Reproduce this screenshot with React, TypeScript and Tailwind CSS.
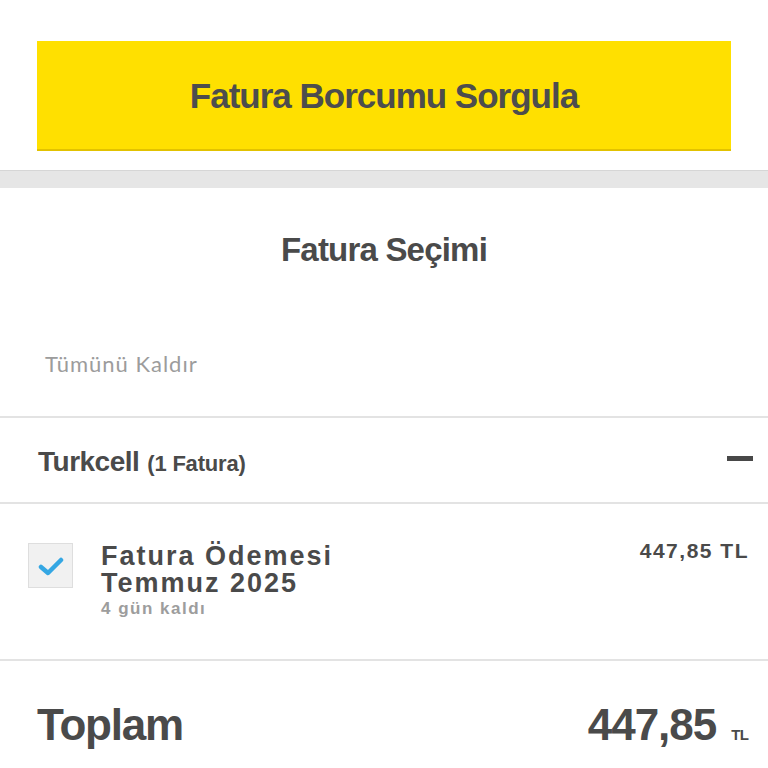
import React from "react";

export default function App() {
  const helv = { fontFamily: '"Liberation Sans", Arial, sans-serif' };
  return (
    <div className="w-[768px] h-[768px] overflow-hidden bg-white text-[#4a4a4a]" style={helv}>
      <div className="pt-[41px] px-[37px] pb-[19px]">
        <div className="h-[110px] bg-[#ffe000] border-b-2 border-[#e2c200] flex items-center justify-center">
          <span className="text-[35px] font-bold tracking-[-1px] text-[#4d4d4d] leading-[40px] mt-[2px]">Fatura Borcumu Sorgula</span>
        </div>
      </div>
      <div className="h-[18px] bg-[#e6e6e6] border-t border-[#d6d6d6]" />
      <div className="pt-[42px] flex justify-center">
        <span className="text-[33px] font-bold tracking-[-0.8px] text-[#4a4a4a] leading-[40px]">Fatura Seçimi</span>
      </div>
      <div className="pt-[77px] pl-[45px] h-[146px]">
        <span className="text-[22px] text-[#9c9c9c] tracking-[1px]" style={{ fontFamily: '"Lato", "Noto Sans", sans-serif', fontWeight: 400 }}>
          Tümünü Kaldır
        </span>
      </div>
      <div className="border-t-2 border-[#e3e3e3] h-[86px] flex items-center justify-between pl-[38px] pr-[15px]">
        <div className="flex items-baseline pt-[4px]">
          <span className="text-[28px] font-bold tracking-[-0.5px] text-[#4a4a4a]">Turkcell</span>
          <span className="text-[22px] font-bold tracking-[-0.2px] text-[#4a4a4a] ml-[8px]">(1 Fatura)</span>
        </div>
        <div className="w-[26px] h-[5px] bg-[#484848] mt-[-4px]" />
      </div>
      <div className="border-t-2 border-[#e3e3e3] h-[157px] flex pl-[28px] pr-[19px] pt-[37px]">
        <div className="w-[45px] h-[45px] mt-[2px] bg-[#f1f1f1] border border-[#dedede] flex items-center justify-center shrink-0">
          <svg width="26" height="22" viewBox="0 0 26 22">
            <path d="M3 12 L10 18 L23 5" fill="none" stroke="#35a7e3" strokeWidth="4.5" strokeLinecap="round" strokeLinejoin="round" />
          </svg>
        </div>
        <div className="ml-[28px] flex-1 pt-[2px]">
          <div className="text-[27px] font-bold tracking-[2px] leading-[27px] text-[#4a4a4a]">Fatura Ödemesi</div>
          <div className="text-[27px] font-bold tracking-[2px] leading-[27px] text-[#4a4a4a]">Temmuz 2025</div>
          <div className="text-[17px] font-bold tracking-[1.5px] leading-[22px] text-[#9d9d9d] mt-[1px]">4 gün kaldı</div>
        </div>
        <div className="text-[21px] font-bold tracking-[1.5px] text-[#4a4a4a] leading-[24px] mt-[-2px]">447,85 TL</div>
      </div>
      <div className="border-t-2 border-[#e3e3e3] flex items-center justify-between pl-[37px] pr-[20px] pt-[38px]">
        <span className="text-[44px] font-bold tracking-[-1.2px] text-[#4a4a4a] leading-[52px]">Toplam</span>
        <div className="flex items-baseline">
          <span className="text-[44px] font-bold tracking-[-1px] text-[#4a4a4a] leading-[52px]">447,85</span>
          <span className="text-[15px] font-bold tracking-[-0.8px] text-[#4a4a4a] ml-[15px]">TL</span>
        </div>
      </div>
    </div>
  );
}
